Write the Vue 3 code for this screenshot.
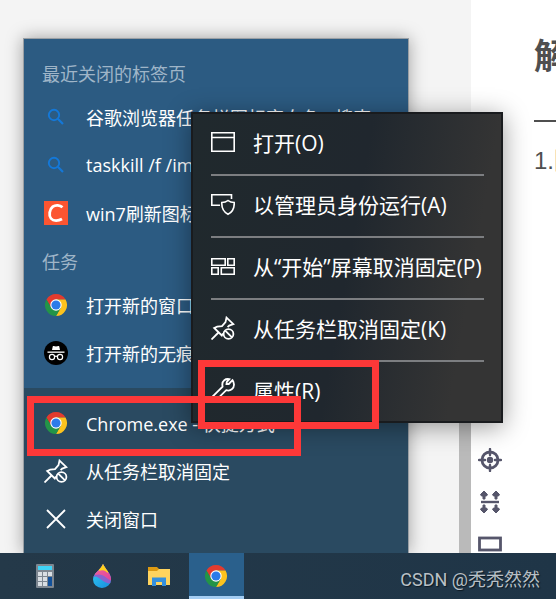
<script setup>
const recent = [
  { icon: 'search', text: '谷歌浏览器任务栏图标变白色 - 搜索' },
  { icon: 'search', text: 'taskkill /f /im explorer.exe' },
  { icon: 'csdn', text: 'win7刷新图标缓存' },
];

const tasks = [
  { icon: 'chrome', text: '打开新的窗口' },
  { icon: 'incognito', text: '打开新的无痕式窗口' },
];

const appActions = [
  { icon: 'chrome', text: 'Chrome.exe - 快捷方式' },
  { icon: 'unpin', text: '从任务栏取消固定' },
  { icon: 'close', text: '关闭窗口' },
];

const menu = [
  { icon: 'window', text: '打开(O)' },
  { icon: 'admin', text: '以管理员身份运行(A)' },
  { icon: 'tiles', text: '从“开始”屏幕取消固定(P)' },
  { icon: 'unpin', text: '从任务栏取消固定(K)' },
  { icon: 'wrench', text: '属性(R)' },
];

const apps = [
  { icon: 'calculator', label: '计算器' },
  { icon: 'paint', label: '画图 3D' },
  { icon: 'folder', label: '文件资源管理器' },
  { icon: 'chrome', label: 'Chrome', active: true },
];

const tools = [
  { icon: 'target', label: '定位' },
  { icon: 'spacing', label: '间距' },
  { icon: 'rect', label: '矩形' },
];
</script>

<template>
  <div class="screen">
    <svg class="sprite" aria-hidden="true">
      <defs>
        <linearGradient id="drop-blue" x1="0" y1="0" x2="1" y2="1">
          <stop offset="0" stop-color="#35d6f5" />
          <stop offset="1" stop-color="#1587dd" />
        </linearGradient>
        <linearGradient id="drop-pink" x1="0" y1="0" x2="1" y2="1">
          <stop offset="0" stop-color="#f06a9c" />
          <stop offset="1" stop-color="#e0409a" />
        </linearGradient>
        <clipPath id="drop-shape">
          <path d="M13 0C15 5 21 9 21 15.500A9 8.500 0 0 1 3 15.500C3 9 11 6 13 0Z" />
        </clipPath>
      </defs>
      <symbol id="search" viewBox="0 0 24 24">
        <circle cx="10" cy="10" r="5.200" fill="none" stroke="#1478d8" stroke-width="1.900" />
        <path d="M13.800 13.800L19 19" stroke="#1478d8" stroke-width="2.200" />
      </symbol>
      <symbol id="csdn" viewBox="0 0 24 24">
        <rect width="24" height="24" fill="#fc5531" />
        <path
          d="M18.500 6.200C16 4 11.500 3.500 8.800 5.700C5.300 8.500 4.600 14.500 7 17.500C9.500 20.500 14.500 20 18 18"
          fill="none"
          stroke="#fff"
          stroke-width="2.800"
        />
      </symbol>
      <symbol id="chrome" viewBox="0 0 24 24">
        <path d="M2.470 6.500A11 11 0 0 1 21.530 6.500H12V12L7.240 14.750Z" fill="#e33b2e" />
        <path d="M21.530 6.500A11 11 0 0 1 12 23L16.760 14.750L12 12V6.500Z" fill="#fcc31e" />
        <path d="M12 23A11 11 0 0 1 2.470 6.500L7.240 14.750L12 12L16.760 14.750Z" fill="#239447" />
        <circle cx="12" cy="12" r="5.700" fill="#fff" />
        <circle cx="12" cy="12" r="4.600" fill="#2c7be9" />
      </symbol>
      <symbol id="incognito" viewBox="0 0 24 24">
        <circle cx="12" cy="12" r="12" fill="#000" />
        <path d="M8 9L8.800 5.200Q9 4.800 9.600 5L12 5.600L14.400 5Q15 4.800 15.200 5.200L16 9Z" fill="#fff" />
        <rect x="3.500" y="10.500" width="17" height="1.300" fill="#fff" />
        <g fill="none" stroke="#fff" stroke-width="1.200">
          <circle cx="8" cy="16" r="2.600" />
          <circle cx="16" cy="16" r="2.600" />
          <path d="M10.600 15.600Q12 14.800 13.400 15.600" />
        </g>
      </symbol>
      <symbol id="unpin" viewBox="0 0 24 24">
        <g fill="none" stroke="#fff" stroke-width="1.800">
          <path d="M0.500 23.500L7.500 16.500" />
          <path d="M12 17.500L10.800 19.500L3.200 12L6.200 10.600L11 10.200L14.500 6.200L15.500 1.600L22.400 8.200L18.200 9.600L16.600 11.200" />
          <circle cx="17.500" cy="18" r="4.900" />
          <path d="M14.200 14.600L21 21.400" />
        </g>
      </symbol>
      <symbol id="close" viewBox="0 0 24 24">
        <path d="M3 3L21 21M21 3L3 21" stroke="#fff" stroke-width="1.800" />
      </symbol>
      <symbol id="window" viewBox="0 0 24 24">
        <path d="M0.800 2.800H23.200V21.200H0.800ZM0.800 7.500H23.200" fill="none" stroke="#fff" stroke-width="1.600" />
      </symbol>
      <symbol id="admin" viewBox="0 0 24 24">
        <g fill="none" stroke="#fff" stroke-width="1.600">
          <path d="M9 13.300H0.800V2.800H20.500V7" />
          <path d="M17 8.500Q19.500 10.500 23.200 10.500C23.500 16 21.500 20 17 22.300C12.500 20 10.500 16 10.800 10.500Q14.500 10.500 17 8.500Z" />
        </g>
      </symbol>
      <symbol id="tiles" viewBox="0 0 24 24">
        <path
          d="M0.800 4.800H14.200V11.200H0.800ZM16.800 4.800H23.200V11.200H16.800ZM0.800 13.800H7.200V20.200H0.800ZM10.300 13.800H23.200V20.200H10.300Z"
          fill="none"
          stroke="#fff"
          stroke-width="1.600"
        />
      </symbol>
      <symbol id="wrench" viewBox="0 0 24 24">
        <path
          d="M21.500 2.200L17.800 6L15.500 6L15.800 3.900L18.300 1.200C14.500 0.300 11 2.800 11.300 7L11.600 8.600L1.500 18.600C-0.500 21 2.600 24.300 5.200 22.200L15.200 12.200C19.500 13.500 23.200 10.500 23 6.500Q22.600 3.500 21.500 2.200Z"
          fill="none"
          stroke="#fff"
          stroke-width="1.800"
        />
      </symbol>
      <symbol id="calculator" viewBox="0 0 24 24">
        <rect x="3" width="18" height="24" rx="1" fill="#7d8690" />
        <rect x="5" y="2" width="14" height="4" fill="#3fd3f7" />
        <g fill="#d9dee3">
          <rect x="5" y="8" width="4" height="4" />
          <rect x="10" y="8" width="4" height="4" />
          <rect x="15" y="8" width="4" height="4" />
          <rect x="5" y="13" width="4" height="4" />
          <rect x="10" y="13" width="4" height="4" />
          <rect x="5" y="18" width="4" height="4" />
          <rect x="10" y="18" width="4" height="4" />
        </g>
        <rect x="15" y="13" width="4" height="9" fill="#12519a" />
      </symbol>
      <symbol id="paint" viewBox="0 0 24 24">
        <g clip-path="url(#drop-shape)">
          <rect width="24" height="24" fill="url(#drop-blue)" />
          <path d="M0 10L3 13C9 10 11 20 24 20V8H0Z" fill="#8a62cf" />
          <path d="M0 0H24V17C17 17 15 8 5 11Z" fill="url(#drop-pink)" />
          <path d="M8 0H18V9C16 8 14 5 9 7Z" fill="#ffd21c" />
        </g>
      </symbol>
      <symbol id="folder" viewBox="0 0 24 24">
        <path d="M1 3H10L12 5V10H1Z" fill="#dd9a12" />
        <path d="M1 7H10L12 5H23V21H1Z" fill="#ffd45e" />
        <path d="M5 22V13.500H19V22H15V18H9V22Z" fill="#3590dd" />
      </symbol>
      <symbol id="target" viewBox="0 0 24 24">
        <circle cx="12" cy="12" r="8" fill="none" stroke="#56566b" stroke-width="2.800" />
        <circle cx="12" cy="12" r="3.200" fill="#56566b" />
        <path
          d="M12 1V7M12 17V23M1 12H7M17 12H23"
          stroke="#56566b"
          stroke-width="2.400"
          stroke-linecap="round"
        />
      </symbol>
      <symbol id="spacing" viewBox="0 0 24 24">
        <path d="M3 12H21" stroke="#56566b" stroke-width="2.400" />
        <path
          d="M6 1L9.500 4.500L8.500 6H7V9H5V6H3.500L2.500 4.500ZM18 1L21.500 4.500L20.500 6H19V9H17V6H15.500L14.500 4.500ZM6 23L9.500 19.500L8.500 18H7V15H5V18H3.500L2.500 19.500ZM18 23L21.500 19.500L20.500 18H19V15H17V18H15.500L14.500 19.500Z"
          fill="#56566b"
          stroke="#56566b"
          stroke-linejoin="round"
        />
      </symbol>
      <symbol id="rect" viewBox="0 0 24 24">
        <rect x="1.500" y="6" width="21" height="12" fill="none" stroke="#56566b" stroke-width="2.800" />
      </symbol>
    </svg>

    <main class="desktop">
      <div class="editor"></div>
      <div class="scroll"><div class="thumb"></div></div>
      <div class="preview">
        <div class="tools">
          <button v-for="tool in tools" :key="tool.icon" type="button" :aria-label="tool.label">
            <svg class="icon"><use :href="'#' + tool.icon" /></svg>
          </button>
        </div>
        <article>
          <h1>解决</h1>
          <hr />
          <p>1.隐</p>
        </article>
      </div>

      <section class="jump-list">
        <div class="history">
          <h2>最近关闭的标签页</h2>
          <button v-for="item in recent" :key="item.text" type="button">
            <svg class="icon"><use :href="'#' + item.icon" /></svg>
            <span>{{ item.text }}</span>
          </button>
          <h2 class="second">任务</h2>
          <button v-for="item in tasks" :key="item.text" type="button">
            <svg class="icon"><use :href="'#' + item.icon" /></svg>
            <span>{{ item.text }}</span>
          </button>
        </div>
        <div class="app-actions">
          <button v-for="item in appActions" :key="item.text" type="button">
            <svg class="icon"><use :href="'#' + item.icon" /></svg>
            <span>{{ item.text }}</span>
          </button>
        </div>
      </section>

      <ul class="context-menu">
        <li v-for="item in menu" :key="item.text">
          <button type="button">
            <svg class="icon"><use :href="'#' + item.icon" /></svg>
            <span>{{ item.text }}</span>
          </button>
        </li>
      </ul>

      <div class="mark mark-properties"></div>
      <div class="mark mark-shortcut"></div>
    </main>

    <footer class="taskbar">
      <button
        v-for="app in apps"
        :key="app.icon"
        type="button"
        :class="{ active: app.active }"
        :aria-label="app.label"
      >
        <svg class="icon"><use :href="'#' + app.icon" /></svg>
      </button>
      <span class="watermark">CSDN @秃秃然然</span>
    </footer>
  </div>
</template>

<style>
body {
  margin: 0;
}
</style>

<style scoped>
.screen {
  display: flex;
  flex-direction: column;
  min-height: 100vh;
  overflow: hidden;
  font-family: 'Open Sans', 'Noto Sans CJK SC', sans-serif;
}

.sprite {
  position: absolute;
  width: 0;
  height: 0;
}

button {
  padding: 0;
  border: 0;
  background: none;
  color: inherit;
  font: inherit;
  text-align: left;
}

.icon {
  display: block;
  flex: none;
  width: 24px;
  height: 24px;
}

.desktop {
  position: relative;
  flex: 1;
  display: grid;
  grid-template-columns: 1fr 12px 85px;
  min-height: 553px;
}

.editor,
.scroll {
  background: #f4f4f4;
}

.scroll {
  display: flex;
  align-items: flex-end;
}

.thumb {
  width: 100%;
  height: 40%;
  background: #bababa;
}

.preview {
  display: flex;
  overflow: hidden;
  background: #fff;
  color: #4f4f4f;
}

.tools {
  display: flex;
  flex: none;
  flex-direction: column;
  justify-content: flex-end;
  gap: 18px;
  padding: 0 7px;
}

.tools button:last-child {
  margin-bottom: -3px;
}

article {
  flex: none;
  padding: 30px 0 0 25px;
}

h1 {
  margin: 0 0 39px;
  font-size: 35px;
  line-height: 51px;
}

hr {
  height: 2px;
  margin: 0;
  border: 0;
  background: #4f4f4f;
}

article p {
  margin: 21px 0 0;
  font-family: 'Liberation Sans', 'Noto Sans CJK SC', sans-serif;
  font-size: 24px;
  line-height: 36px;
}

.jump-list {
  position: absolute;
  bottom: 0;
  left: 23px;
  box-sizing: border-box;
  width: 386px;
  border: 1px solid #9a9fa4;
  border-bottom: 0;
  box-shadow: 0 0 16px rgba(0, 0, 0, 0.35);
  color: #fff;
  font-size: 18px;
}

.history {
  padding-bottom: 11px;
  background: #2c5b82;
}

.app-actions {
  padding: 11px 0 10px;
  background: #2a4a61;
}

.jump-list h2 {
  margin: 0;
  padding: 16px 18px 0;
  color: #9fb5c8;
  font-size: 18px;
  font-weight: 400;
  line-height: 38px;
}

.jump-list .second {
  padding-top: 6px;
}

.jump-list button {
  display: flex;
  align-items: center;
  gap: 18px;
  width: 100%;
  height: 48px;
  padding: 0 0 1px 20px;
  white-space: nowrap;
}

.context-menu {
  position: absolute;
  bottom: 130px;
  left: 191px;
  box-sizing: border-box;
  width: 312px;
  margin: 0;
  padding: 0 17px 0 18px;
  border: 2px solid #191b1e;
  background: linear-gradient(100deg, #20292d, #20272e 50%, #343434 85%);
  box-shadow: 0 4px 24px rgba(0, 0, 0, 0.4);
  color: #fff;
  font-size: 21px;
  list-style: none;
}

.context-menu li + li {
  border-top: 2px solid #7c7e81;
}

.context-menu button {
  display: flex;
  align-items: center;
  gap: 18px;
  width: 100%;
  height: 60px;
  padding-bottom: 4px;
  white-space: nowrap;
}

.context-menu li:last-child button {
  height: 59px;
}

.mark {
  position: absolute;
  box-sizing: border-box;
  border: 7px solid #fd3838;
  pointer-events: none;
}

.mark-properties {
  bottom: 124px;
  left: 198px;
  width: 181px;
  height: 69px;
}

.mark-shortcut {
  bottom: 97px;
  left: 27px;
  width: 274px;
  height: 60px;
}

.taskbar {
  position: relative;
  display: flex;
  align-items: stretch;
  gap: 2px;
  height: 46px;
  padding: 0 16px 0 18px;
  background: linear-gradient(90deg, #243949, #1f3547);
}

.taskbar button {
  display: flex;
  align-items: center;
  justify-content: center;
  box-sizing: border-box;
  width: 55px;
  padding-right: 1px;
}

.taskbar .active {
  border-bottom: 3px solid #a3cdf3;
  padding-top: 3px;
  background: #2a608c;
}

.watermark {
  margin-left: auto;
  padding-top: 4px;
  color: #b9c0c6;
  font-family: Roboto, 'Noto Sans CJK SC', sans-serif;
  font-size: 18px;
  line-height: 46px;
  white-space: nowrap;
  text-shadow: 1px 1px 1px #0c1822;
}
</style>
